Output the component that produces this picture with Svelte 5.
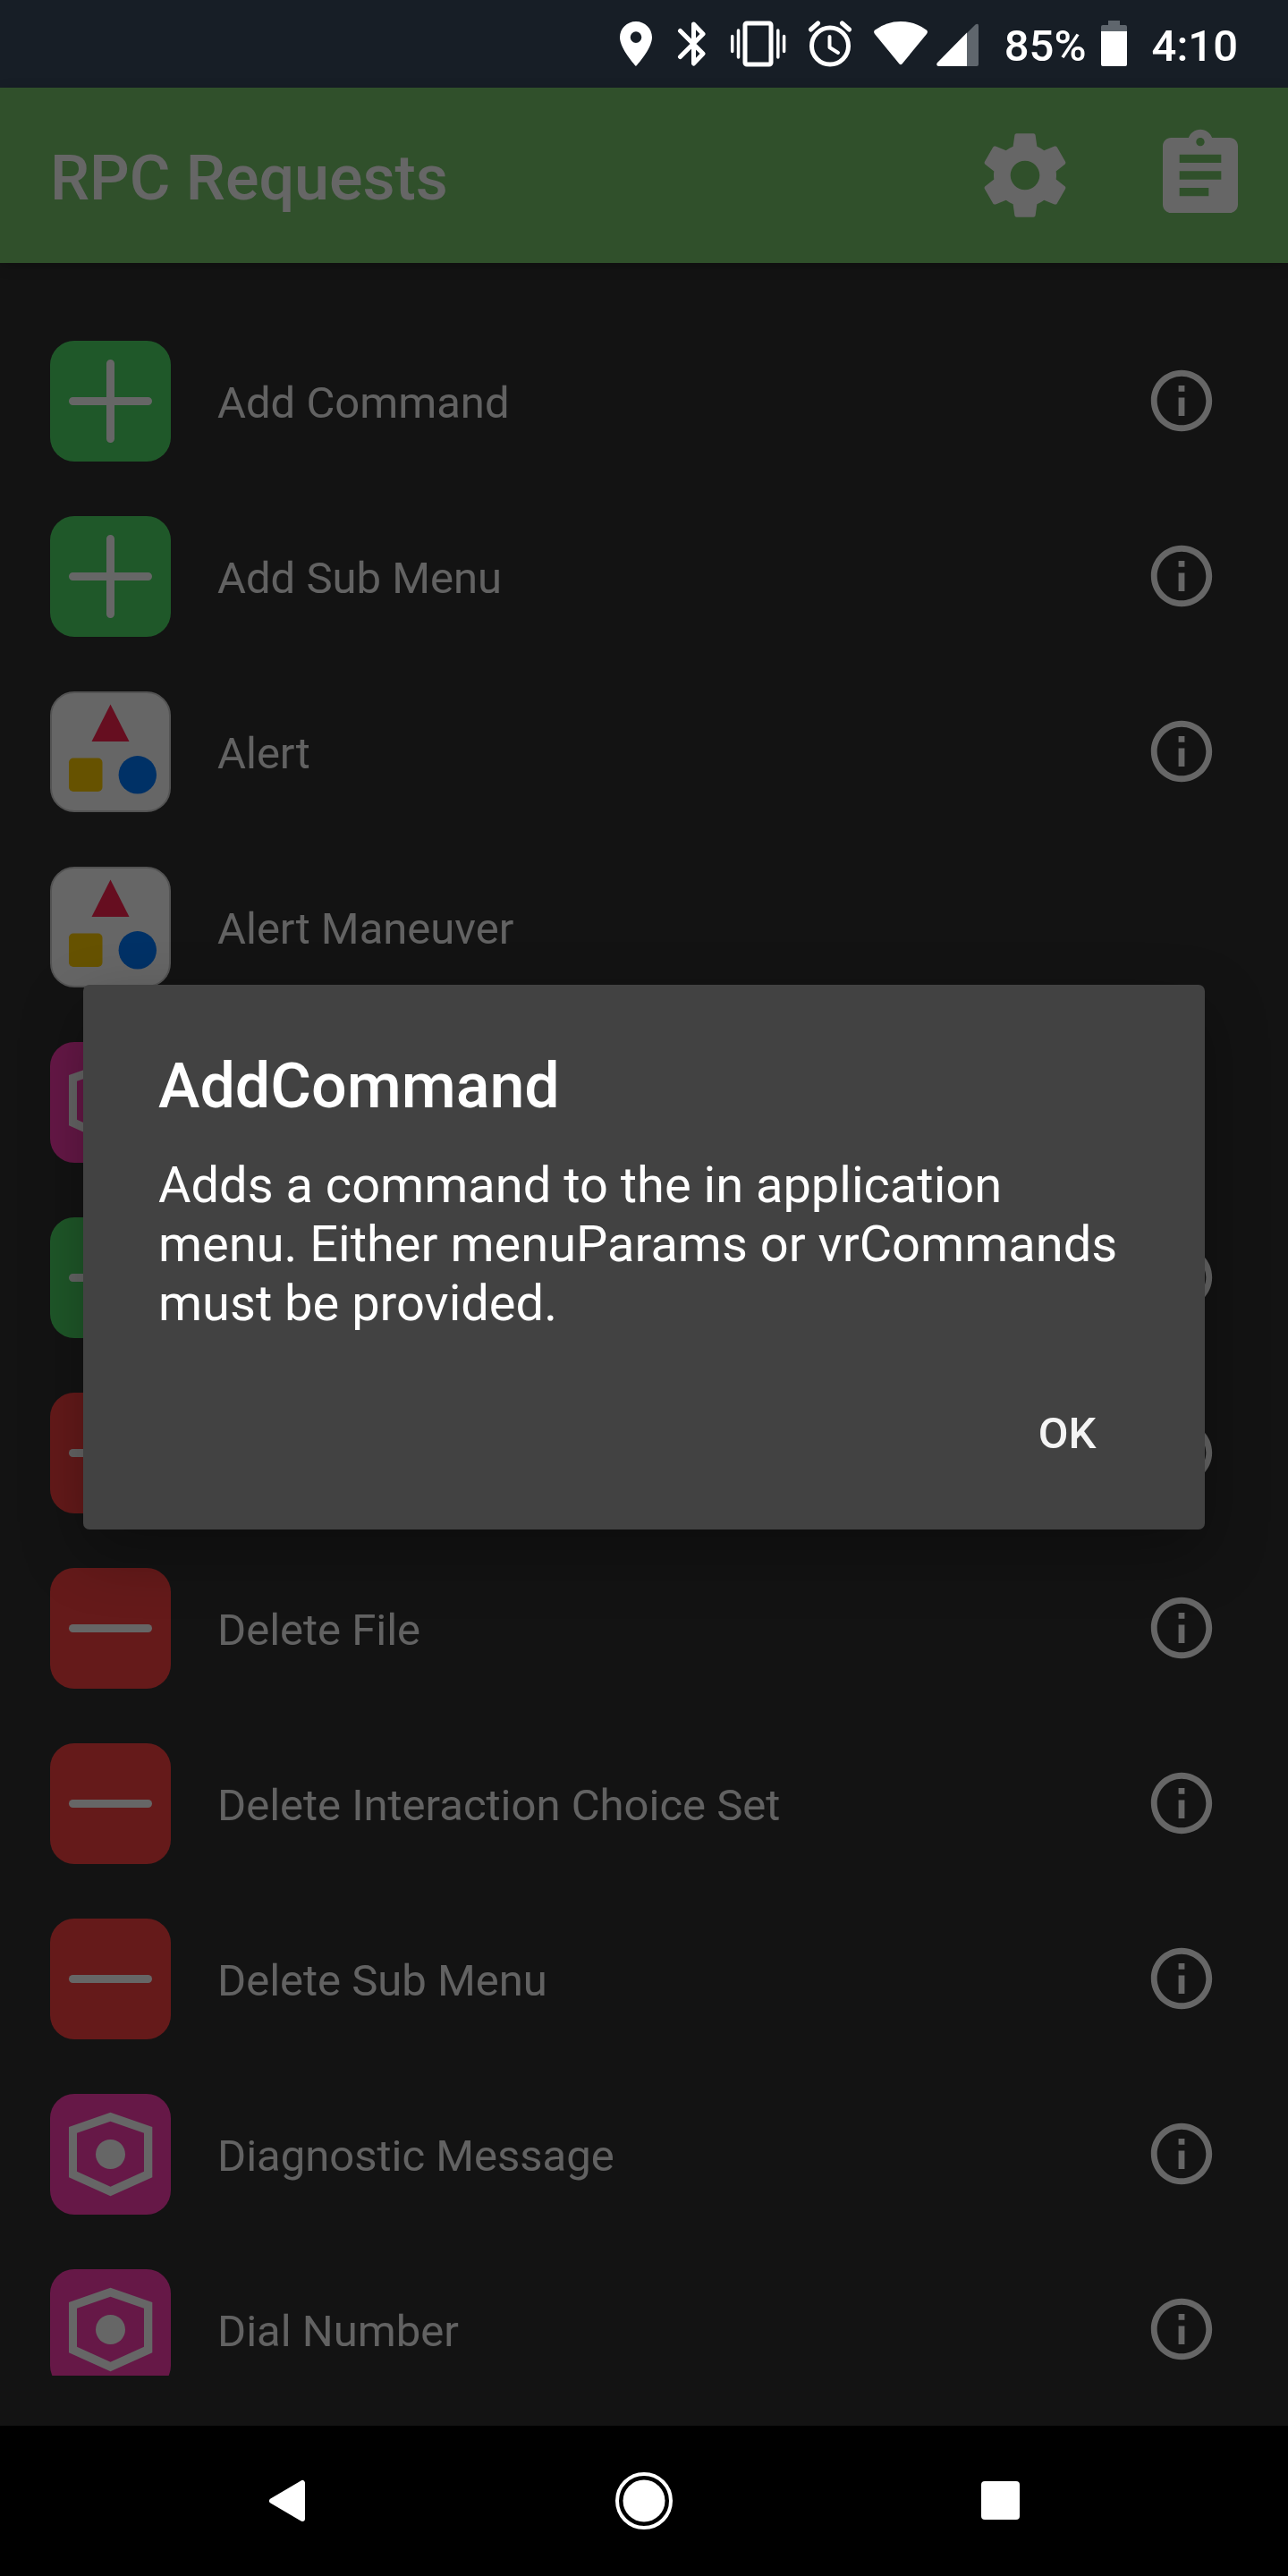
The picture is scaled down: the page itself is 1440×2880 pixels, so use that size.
<script>
  const requests = [
    { name: 'Add Command', kind: 'add', info: true },
    { name: 'Add Sub Menu', kind: 'add', info: true },
    { name: 'Alert', kind: 'alert', info: true },
    { name: 'Alert Maneuver', kind: 'alert', info: false },
    { name: '', kind: 'other', info: false },
    { name: '', kind: 'add', info: true },
    { name: '', kind: 'remove', info: true },
    { name: 'Delete File', kind: 'remove', info: true },
    { name: 'Delete Interaction Choice Set', kind: 'remove', info: true },
    { name: 'Delete Sub Menu', kind: 'remove', info: true },
    { name: 'Diagnostic Message', kind: 'other', info: true },
    { name: 'Dial Number', kind: 'other', info: true }
  ];

  let open = $state(true);
</script>

<div class="screen">
  <div class="status">
    <div class="status-icons">
      <svg width="38" height="52" viewBox="693 23 38 52" aria-hidden="true">
        <path fill="#fff" fill-rule="evenodd" d="M711 24c-10 0-18 8-18 17.700 0 13 18 32.300 18 32.300s18-19.300 18-32.300C729 32 721 24 711 24zm0 11.300a6.300 6.300 0 1 1 0 12.600a6.300 6.300 0 0 1 0-12.600z" />
      </svg>
      <svg width="36" height="52" viewBox="755 23 36 52" aria-hidden="true">
        <path fill="none" stroke="#fff" stroke-width="5" stroke-linecap="round" stroke-linejoin="round" d="M760.500 34.500L786 60L775.500 71V27L786 38L760.500 63.500" />
      </svg>
      <svg width="64" height="52" viewBox="815 23 64 52" aria-hidden="true">
        <rect x="833" y="26" width="29" height="46" rx="2" fill="none" stroke="#fff" stroke-width="5" />
        <path stroke="#fff" stroke-width="3.500" stroke-linecap="round" d="M818.700 40.500v17M825.500 34v30M869.800 34v30M876.600 40.500v17" />
      </svg>
      <svg width="50" height="52" viewBox="902 23 50 52" aria-hidden="true">
        <g fill="none" stroke="#fff" stroke-width="5" stroke-linecap="round">
          <circle cx="927" cy="51.500" r="20.500" />
          <path d="M905.500 33l8-7M948.500 33l-8-7" />
          <path stroke-width="4" stroke-linejoin="round" d="M926.500 41v12l9.500 6" />
        </g>
      </svg>
      <div class="network">
        <svg width="60" height="52" viewBox="976 23 60 52" aria-hidden="true">
          <path fill="#fff" d="M977.300 33.500Q990 24 1006 24T1034.700 33.500Q1037 35.300 1035 38L1007.500 71.500Q1006 73 1004.500 71.500L977 38Q975 35.300 977.300 33.500z" />
        </svg>
        <svg width="48" height="52" viewBox="1046 23 48 52" aria-hidden="true">
          <path fill="#5f666d" d="M1080 37l9.500-9.500Q1093 25.500 1093 29v43q0 2-2 2h-11z" />
          <path fill="#fff" d="M1080 36.500V74h-32q-3-1-1-4z" />
        </svg>
      </div>
    </div>
    <span>85%</span>
    <svg width="29" height="52" viewBox="0 0 29 52" aria-hidden="true">
      <path fill="#5f666d" d="M8 0h13v5h6q2 0 2 2v6H0V7q0-2 2-2h6z" />
      <path fill="#fff" d="M0 12h29v37q0 2-2 2H2q-2 0-2-2z" />
    </svg>
    <time>4:10</time>
  </div>

  <div class="app">
    <header>
      <h1>RPC Requests</h1>
      <div class="actions">
        <button aria-label="Settings">
          <svg viewBox="0 0 24 24" aria-hidden="true"><path d="M19.430 12.980c.04-.32.07-.64.07-.98s-.03-.66-.07-.98l2.110-1.650c.19-.15.24-.42.12-.64l-2-3.460c-.12-.22-.39-.3-.61-.22l-2.490 1c-.52-.4-1.080-.73-1.690-.98l-.38-2.650C14.460 2.180 14.250 2 14 2h-4c-.25 0-.46.18-.49.42l-.38 2.650c-.61.25-1.170.59-1.690.98l-2.490-1c-.23-.09-.49 0-.61.22l-2 3.460c-.13.22-.07.49.12.64l2.110 1.650c-.04.32-.07.65-.07.98s.03.66.07.98l-2.110 1.650c-.19.15-.24.42-.12.64l2 3.460c.12.22.39.3.61.22l2.490-1c.52.4 1.080.73 1.690.98l.38 2.650c.03.24.24.42.49.42h4c.25 0 .46-.18.49-.42l.38-2.650c.61-.25 1.170-.59 1.690-.98l2.490 1c.23.09.49 0 .61-.22l2-3.460c.12-.22.07-.49-.12-.64l-2.110-1.650zM12 15.500c-1.930 0-3.500-1.570-3.500-3.500s1.570-3.500 3.500-3.500 3.500 1.570 3.500 3.500-1.570 3.500-3.500 3.500z" /></svg>
        </button>
        <button aria-label="Log">
          <svg viewBox="0 0 24 24" aria-hidden="true"><path d="M19 3h-4.180C14.400 1.840 13.300 1 12 1c-1.300 0-2.400.84-2.820 2H5c-1.100 0-2 .9-2 2v14c0 1.100.9 2 2 2h14c1.100 0 2-.9 2-2V5c0-1.100-.9-2-2-2zm-7 0c.55 0 1 .45 1 1s-.45 1-1 1-1-.45-1-1 .45-1 1-1zm2 14H7v-2h7v2zm3-4H7v-2h10v2zm0-4H7V7h10v2z" /></svg>
        </button>
      </div>
    </header>

    <main>
      <ul>
        {#each requests as request}
          <li>
            <svg class="tile" viewBox="0 0 135 135" aria-hidden="true">
              {#if request.kind === 'add'}
                <rect width="135" height="135" rx="27" fill="#4fdd68" />
                <path class="bar" d="M67.500 25.500v84M25.500 67.500h84" />
              {:else if request.kind === 'remove'}
                <rect width="135" height="135" rx="27" fill="#fc4343" />
                <path class="bar" d="M25.500 67.500h84" />
              {:else if request.kind === 'alert'}
                <rect x="1" y="1" width="133" height="133" rx="26" fill="#fff" stroke="#d0d0d0" stroke-width="2" />
                <path fill="#ff2550" d="M67.500 14.500L88.500 56h-42z" />
                <rect x="21" y="74.500" width="37.500" height="37.500" rx="5" fill="#ffcc00" />
                <circle cx="97.800" cy="93.300" r="21.200" fill="#007aff" />
              {:else}
                <rect width="135" height="135" rx="27" fill="#ff3cb1" />
                <path fill="#fff" fill-rule="evenodd" d="M67.500 20.700L114.300 37V93.300L67.500 114.300L21 93.300V37zM67.500 30.700L30 43.700V86.700L67.500 103.700L105 86.700V43.700z" />
                <circle cx="67.500" cy="67.500" r="16.500" fill="#fff" />
              {/if}
            </svg>
            <span class="name">{request.name}</span>
            {#if request.info}
              <button class="info" aria-label={'About ' + (request.name || 'this request')} onclick={() => (open = true)}>
                <svg viewBox="0 0 24 24" aria-hidden="true"><path d="M11 7h2v2h-2zm0 4h2v6h-2zm1-9C6.480 2 2 6.480 2 12s4.480 10 10 10 10-4.480 10-10S17.520 2 12 2zm0 18c-4.410 0-8-3.590-8-8s3.590-8 8-8 8 3.590 8 8-3.590 8-8 8z" /></svg>
              </button>
            {/if}
          </li>
        {/each}
      </ul>
    </main>

    {#if open}
      <div class="scrim">
        <div class="dialog" role="dialog" aria-modal="true" aria-labelledby="dialog-title">
          <h2 id="dialog-title">AddCommand</h2>
          <p>Adds a command to the in application menu. Either menuParams or vrCommands must be provided.</p>
          <button class="ok" onclick={() => (open = false)}>OK</button>
        </div>
      </div>
    {/if}
  </div>

  <nav>
    <button aria-label="Back">
      <svg viewBox="0 0 64 64" aria-hidden="true"><path stroke="#fff" stroke-width="6" stroke-linejoin="round" d="M15 32L49 12v40z" /></svg>
    </button>
    <button aria-label="Home">
      <svg viewBox="0 0 64 64" aria-hidden="true"><circle cx="32" cy="32" r="30" fill="none" stroke="#fff" stroke-width="4" /><circle cx="32" cy="32" r="23.500" /></svg>
    </button>
    <button aria-label="Overview">
      <svg viewBox="0 0 64 64" aria-hidden="true"><rect x="10" y="10" width="43" height="43" rx="4" /></svg>
    </button>
  </nav>
</div>

<style>
  :global(body) {
    margin: 0;
    background: #000;
  }

  .screen {
    display: flex;
    flex-direction: column;
    height: 100vh;
    font-family: Roboto, 'Liberation Sans', sans-serif;
    color: #fff;
  }

  button {
    display: flex;
    align-items: center;
    justify-content: center;
    margin: 0;
    padding: 0;
    border: 0;
    background: none;
    color: inherit;
    font-family: inherit;
    cursor: pointer;
  }

  svg {
    display: block;
    flex: none;
  }

  button svg {
    fill: #fff;
  }

  .status {
    display: flex;
    flex: none;
    align-items: center;
    justify-content: flex-end;
    height: 98px;
    padding-right: 56px;
    background: #171e26;
    font-size: 49px;
    font-weight: 500;
    line-height: 56px;
  }

  .status span {
    margin: 0 16px 0 28px;
    padding-top: 6px;
  }

  .status time {
    margin-left: 28px;
    padding-top: 6px;
  }

  .status-icons {
    display: flex;
    gap: 24px;
  }

  .network {
    display: flex;
    gap: 10px;
  }

  .app {
    position: relative;
    display: flex;
    flex: 1;
    flex-direction: column;
    min-height: 0;
    background: #303030;
  }

  header {
    display: flex;
    flex: none;
    align-items: center;
    justify-content: space-between;
    height: 196px;
    padding: 0 42px 0 56px;
    background: #78c86b;
    box-shadow: 0 4px 14px rgba(0, 0, 0, 0.2);
  }

  h1,
  h2 {
    margin: 0;
    font-size: 70px;
    font-weight: 500;
    line-height: 82px;
  }

  h1 {
    padding-top: 6px;
  }

  .actions {
    display: flex;
    gap: 84px;
  }

  .actions svg {
    width: 112px;
    height: 112px;
  }

  main {
    display: flex;
    flex: 1;
    min-height: 0;
    padding: 56px;
  }

  ul {
    flex: 1;
    margin: 0;
    padding: 0;
    overflow: hidden;
    list-style: none;
  }

  li {
    display: flex;
    align-items: center;
    height: 196px;
    padding-right: 22px;
  }

  .tile {
    width: 135px;
    height: 135px;
  }

  .bar {
    fill: none;
    stroke: #fff;
    stroke-width: 9;
    stroke-linecap: round;
  }

  .name {
    flex: 1;
    padding: 6px 0 0 52px;
    color: #f4f4f4;
    font-size: 49px;
    line-height: 58px;
  }

  .info svg {
    width: 82px;
    height: 82px;
  }

  .scrim {
    position: absolute;
    inset: 0;
    display: flex;
    align-items: center;
    justify-content: center;
    padding: 0 93px;
    background: rgba(0, 0, 0, 0.6);
  }

  .dialog {
    flex: 1;
    padding: 72px 84px 44px;
    border-radius: 7px;
    background: #424242;
    box-shadow: 0 26px 70px rgba(0, 0, 0, 0.3);
  }

  .dialog p {
    margin: 37px 0 50px;
    font-size: 56px;
    line-height: 66px;
  }

  .ok {
    min-width: 140px;
    height: 126px;
    margin-left: auto;
    color: #f4f4f4;
    font-size: 49px;
    font-weight: 500;
  }

  nav {
    display: grid;
    flex: none;
    grid-template-columns: repeat(3, 1fr);
    height: 168px;
    padding: 0 122px;
    background: #000;
  }

  nav svg {
    width: 64px;
    height: 64px;
  }
</style>
